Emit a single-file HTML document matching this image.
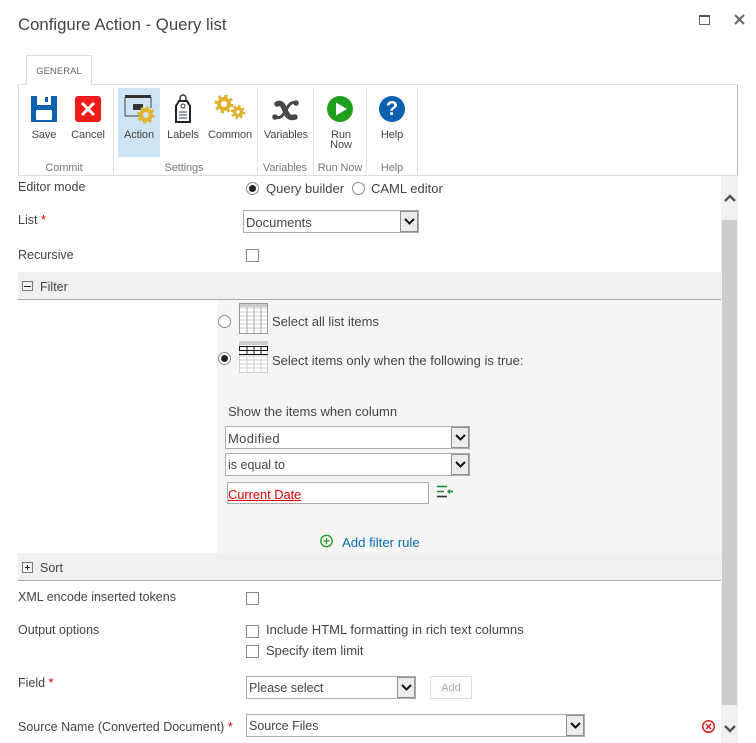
<!DOCTYPE html>
<html><head><meta charset="utf-8"><style>
html,body{margin:0;padding:0;background:#fff}
#p{position:relative;width:756px;height:743px;overflow:hidden;background:#fff;font-family:"Liberation Sans",sans-serif;font-size:13px;color:#444}
#p>*{position:absolute}
.t{white-space:nowrap;line-height:16px}
.l{font-size:12.500px}
.c{text-align:center;white-space:nowrap;line-height:10px;font-size:11px;color:#444;letter-spacing:-.1px}
.g{text-align:center;white-space:nowrap;font-size:11px;color:#777;line-height:12px;letter-spacing:-.1px}
.v{width:1px;background:#e1e1e1;top:88px;height:88px}
.sel{box-sizing:border-box;border:1px solid #ababab;background:#fff;height:23px;line-height:23px;padding-left:2px;white-space:nowrap;color:#444}
.ar{position:absolute;right:0;top:0;width:18px;height:21px;box-sizing:border-box;border:1px solid #8f8f8f;background:#ececec}
.ar svg{position:absolute;left:3px;top:6px}
.cb{box-sizing:border-box;width:13px;height:13px;border:1px solid #888;background:#fff}
.r{box-sizing:border-box;width:13px;height:13px;border:1px solid #888;border-radius:50%;background:#fff}
.r.on::after{content:"";position:absolute;left:2px;top:2px;width:7px;height:7px;border-radius:50%;background:#222}
.req{color:#b00}
</style></head><body><div id="p">
<div class="t" style="left:18px;top:14px;font-size:16.750px;line-height:22px;color:#444">Configure Action - Query list</div>
<svg style="left:698px;top:13px" width="14" height="13"><rect x="1.500" y="2.500" width="10" height="9" fill="none" stroke="#666"/><rect x="1" y="2" width="11" height="2" fill="#555"/></svg>
<svg style="left:733px;top:13px" width="13" height="13"><path d="M2 2L11 11M11 2L2 11" stroke="#666" stroke-width="2" fill="none"/></svg>

<div style="left:18px;top:84px;width:720px;height:92px;box-sizing:border-box;border:1px solid #ddd;border-right-color:#bbb"></div>
<div style="left:26px;top:55px;width:66px;height:30px;box-sizing:border-box;border:1px solid #ddd;border-bottom:0;background:#fff"></div>
<div class="t" style="left:26px;top:64px;width:66px;text-align:center;font-size:9.500px;color:#666">GENERAL</div>

<div style="left:118px;top:88px;width:42px;height:69px;background:#cde4f5"></div>
<div class="v" style="left:113px"></div><div class="v" style="left:257px"></div><div class="v" style="left:313px"></div><div class="v" style="left:366px"></div><div class="v" style="left:417px"></div>

<svg style="left:31px;top:96px" width="26" height="26"><path d="M0 0H26V26H0Z" fill="#0f62ac"/><rect x="6" y="0" width="14" height="9" fill="#fff"/><rect x="14" y="1" width="3" height="5" fill="#0f62ac"/><rect x="5" y="14" width="16" height="10" rx="1" fill="#fff"/></svg>
<svg style="left:75px;top:96px" width="26" height="26"><rect width="26" height="26" rx="3" fill="#ee1c1c"/><path d="M7 7L19 19M19 7L7 19" stroke="#fff" stroke-width="3"/></svg>
<svg style="left:124px;top:94px" width="31" height="30"><path d="M1 3V22M1 22H16M27 3V14" stroke="#444" fill="none"/><rect x="1" y="1" width="26" height="3" fill="#333"/><rect x="9" y="10" width="10" height="6" fill="#333"/><g fill="none" stroke="#e0b431" ><circle cx="22" cy="21" r="5" stroke-width="4"/><circle cx="22" cy="21" r="7.500" stroke-width="2.500" stroke-dasharray="2.600 3.300"/></g></svg>
<svg style="left:174px;top:94px" width="18" height="30"><path d="M6 8V4a3 3 0 0 1 6 0V8" fill="none" stroke="#333" stroke-width="1.400"/><path d="M5 7H13L16 12V28H2V12Z" fill="#fff" stroke="#222" stroke-width="2"/><circle cx="9" cy="12" r="2" fill="none" stroke="#333"/><path d="M5 18H13M5 21H13M5 24H13" stroke="#345" /></svg>
<svg style="left:214px;top:95px" width="32" height="28"><g fill="none" stroke="#e0b431"><circle cx="10" cy="9" r="5" stroke-width="4"/><circle cx="10" cy="9" r="8" stroke-width="3" stroke-dasharray="3 3.300"/><circle cx="24" cy="17" r="3.500" stroke-width="3.500"/><circle cx="24" cy="17" r="6" stroke-width="2.500" stroke-dasharray="2.400 2.300"/></g></svg>
<svg style="left:270px;top:96px" width="32" height="28"><g fill="none" stroke="#484848" stroke-linecap="round"><path d="M7 8C11 6 13 9 15 14C17 19 19 23 25 21" stroke-width="5.500"/><path d="M27 7C22 5 19 8 16 14C13 20 10 23 5 21" stroke-width="3"/></g><circle cx="26" cy="7" r="2.800" fill="#484848"/><circle cx="5" cy="21" r="2.800" fill="#484848"/></svg>
<svg style="left:327px;top:96px" width="26" height="26"><circle cx="13" cy="13" r="13" fill="#1ea01e"/><path d="M9 6.500L20 13L9 19.500Z" fill="#fff"/></svg>
<svg style="left:379px;top:96px" width="26" height="26"><circle cx="13" cy="13" r="13" fill="#0c62ae"/></svg>
<div class="t" style="left:379px;top:99px;width:26px;text-align:center;font:bold 20px/20px 'Liberation Sans',sans-serif;color:#fff">?</div>

<div class="c" style="left:24px;top:130px;width:40px">Save</div>
<div class="c" style="left:68px;top:130px;width:40px">Cancel</div>
<div class="c" style="left:118px;top:130px;width:42px">Action</div>
<div class="c" style="left:163px;top:130px;width:40px">Labels</div>
<div class="c" style="left:205px;top:130px;width:50px">Common</div>
<div class="c" style="left:260px;top:130px;width:52px">Variables</div>
<div class="c" style="left:321px;top:130px;width:40px">Run<br>Now</div>
<div class="c" style="left:372px;top:130px;width:40px">Help</div>
<div class="g" style="left:24px;top:162px;width:80px">Commit</div>
<div class="g" style="left:144px;top:162px;width:80px">Settings</div>
<div class="g" style="left:258px;top:162px;width:54px">Variables</div>
<div class="g" style="left:314px;top:162px;width:52px">Run Now</div>
<div class="g" style="left:367px;top:162px;width:50px">Help</div>

<div style="left:721px;top:176px;width:17px;height:567px;background:#f0f0f0"></div>
<div style="left:722px;top:220px;width:15px;height:485px;background:#cdcdcd"></div>
<svg style="left:723px;top:192px" width="14" height="12"><path d="M2 9L7 4L12 9" fill="none" stroke="#555" stroke-width="2.400"/></svg>
<svg style="left:723px;top:723px" width="14" height="12"><path d="M2 3L7 8L12 3" fill="none" stroke="#555" stroke-width="2.400"/></svg>

<div class="t l" style="left:18px;top:179px">Editor mode</div>
<div class="r on" style="left:246px;top:182px"></div>
<div class="t" style="left:266px;top:181px">Query builder</div>
<div class="r" style="left:352px;top:182px"></div>
<div class="t" style="left:371px;top:181px">CAML editor</div>

<div class="t l" style="left:18px;top:212px">List <span class="req">*</span></div>
<div class="sel" style="left:243px;top:210px;width:176px">Documents<div class="ar"><svg width="11" height="8"><path d="M1 1L5.500 5.500L10 1" fill="none" stroke="#111" stroke-width="2"/></svg></div></div>

<div class="t l" style="left:18px;top:247px">Recursive</div>
<div class="cb" style="left:246px;top:249px"></div>

<div style="left:18px;top:272px;width:703px;height:28px;box-sizing:border-box;background:#f0f0f0;border-bottom:1px solid #aaa"></div>
<div style="left:22px;top:281px;width:11px;height:10px;box-sizing:border-box;border:1px solid #777;background:#f5f5f5"></div>
<div style="left:24px;top:286px;width:7px;height:1px;background:#222"></div>
<div class="t l" style="left:40px;top:279px">Filter</div>

<div style="left:217px;top:300px;width:504px;height:253px;background:#f5f5f5"></div>
<div class="r" style="left:218px;top:315px"></div>
<svg style="left:239px;top:303px" width="29" height="31"><rect x=".5" y=".5" width="28" height="30" fill="#fff" stroke="#999"/><path d="M1 5H28M1 9H28M1 13H28M1 17H28M1 21H28M1 25H28" stroke="#ccc"/><path d="M8 1V30M15 1V30M22 1V30" stroke="#aaa"/><rect x="1" y="1" width="27" height="3" fill="#ccc"/></svg>
<div class="t" style="left:272px;top:314px">Select all list items</div>
<div class="r on" style="left:218px;top:352px"></div>
<svg style="left:239px;top:341px" width="29" height="32"><rect x=".5" y=".5" width="28" height="31" fill="#fff" stroke="#ccc"/><rect x="1" y="1" width="27" height="3" fill="#ccc"/><path d="M1 15H28M1 19H28M1 23H28M1 27H28" stroke="#ccc"/><path d="M8 16V31M15 16V31M22 16V31" stroke="#ccc"/><path d="M0 5.500H29M0 9.500H29M0 13.500H29" stroke="#111"/><path d="M.5 5V9M8 5V9M15 5V9M22 5V9M28.500 5V9M8 10V14M15 10V14M22 10V14" stroke="#111"/></svg>
<div class="t" style="left:272px;top:353px">Select items only when the following is true:</div>

<div class="t" style="left:228px;top:404px">Show the items when column</div>
<div class="sel" style="left:225px;top:426px;width:245px"><span style="letter-spacing:.35px">Modified</span><div class="ar"><svg width="11" height="8"><path d="M1 1L5.500 5.500L10 1" fill="none" stroke="#111" stroke-width="2"/></svg></div></div>
<div class="sel" style="left:225px;top:453px;width:245px;font-size:12.500px">is equal to<div class="ar"><svg width="11" height="8"><path d="M1 1L5.500 5.500L10 1" fill="none" stroke="#111" stroke-width="2"/></svg></div></div>
<div class="sel" style="left:227px;top:482px;width:202px;height:22px;line-height:24px;padding-left:0;color:#d00;text-decoration:underline;font-size:12.800px">Current Date</div>
<svg style="left:437px;top:485px" width="18" height="14"><path d="M0 1.500H10M0 6.500H7" stroke="#1a8a3a" stroke-width="1.600"/><path d="M0 11.500H10" stroke="#333" stroke-width="1.600"/><path d="M11 6.500H16" stroke="#1a8a3a" stroke-width="1.600"/><path d="M13 4L10 6.500L13 9Z" fill="#1a8a3a"/></svg>

<svg style="left:320px;top:534px" width="15" height="15"><circle cx="6.500" cy="7" r="5.700" fill="none" stroke="#1a9a1a" stroke-width="1.300"/><path d="M6.500 4V10M3.500 7H9.500" stroke="#1a9a1a" stroke-width="1.200"/></svg>
<div class="t" style="left:342px;top:535px;color:#0a6cb0;font-size:13.200px">Add filter rule</div>

<div style="left:18px;top:553px;width:703px;height:28px;box-sizing:border-box;background:#f0f0f0;border-bottom:1px solid #aaa"></div>
<div style="left:22px;top:562px;width:11px;height:11px;box-sizing:border-box;border:1px solid #777;background:#f5f5f5"></div>
<div style="left:25px;top:567px;width:5px;height:1px;background:#222"></div>
<div style="left:27px;top:565px;width:1px;height:5px;background:#222"></div>
<div class="t l" style="left:40px;top:560px">Sort</div>

<div class="t l" style="left:18px;top:589px">XML encode inserted tokens</div>
<div class="cb" style="left:246px;top:592px"></div>
<div class="t l" style="left:18px;top:622px">Output options</div>
<div class="cb" style="left:246px;top:625px"></div>
<div class="t" style="left:266px;top:622px;font-size:13.050px">Include HTML formatting in rich text columns</div>
<div class="cb" style="left:246px;top:645px"></div>
<div class="t" style="left:266px;top:643px">Specify item limit</div>

<div class="t l" style="left:18px;top:675px">Field <span class="req">*</span></div>
<div class="sel" style="left:246px;top:676px;width:170px;font-size:12.500px">Please select<div class="ar"><svg width="11" height="8"><path d="M1 1L5.500 5.500L10 1" fill="none" stroke="#111" stroke-width="2"/></svg></div></div>
<div style="left:430px;top:676px;width:42px;height:23px;box-sizing:border-box;border:1px solid #ddd;text-align:center;line-height:22px;font-size:11px;color:#aaa;background:#fdfdfd">Add</div>

<div class="t l" style="left:18px;top:719px">Source Name (Converted Document) <span class="req">*</span></div>
<div class="sel" style="left:246px;top:714px;width:339px;font-size:12.500px">Source Files<div class="ar"><svg width="11" height="8"><path d="M1 1L5.500 5.500L10 1" fill="none" stroke="#111" stroke-width="2"/></svg></div></div>
<svg style="left:701px;top:719px" width="15" height="15"><circle cx="7.500" cy="7.500" r="5.800" fill="none" stroke="#d81e1e" stroke-width="1.500"/><path d="M5 5L10 10M10 5L5 10" stroke="#d81e1e" stroke-width="1.500"/></svg>
</div></body></html>
